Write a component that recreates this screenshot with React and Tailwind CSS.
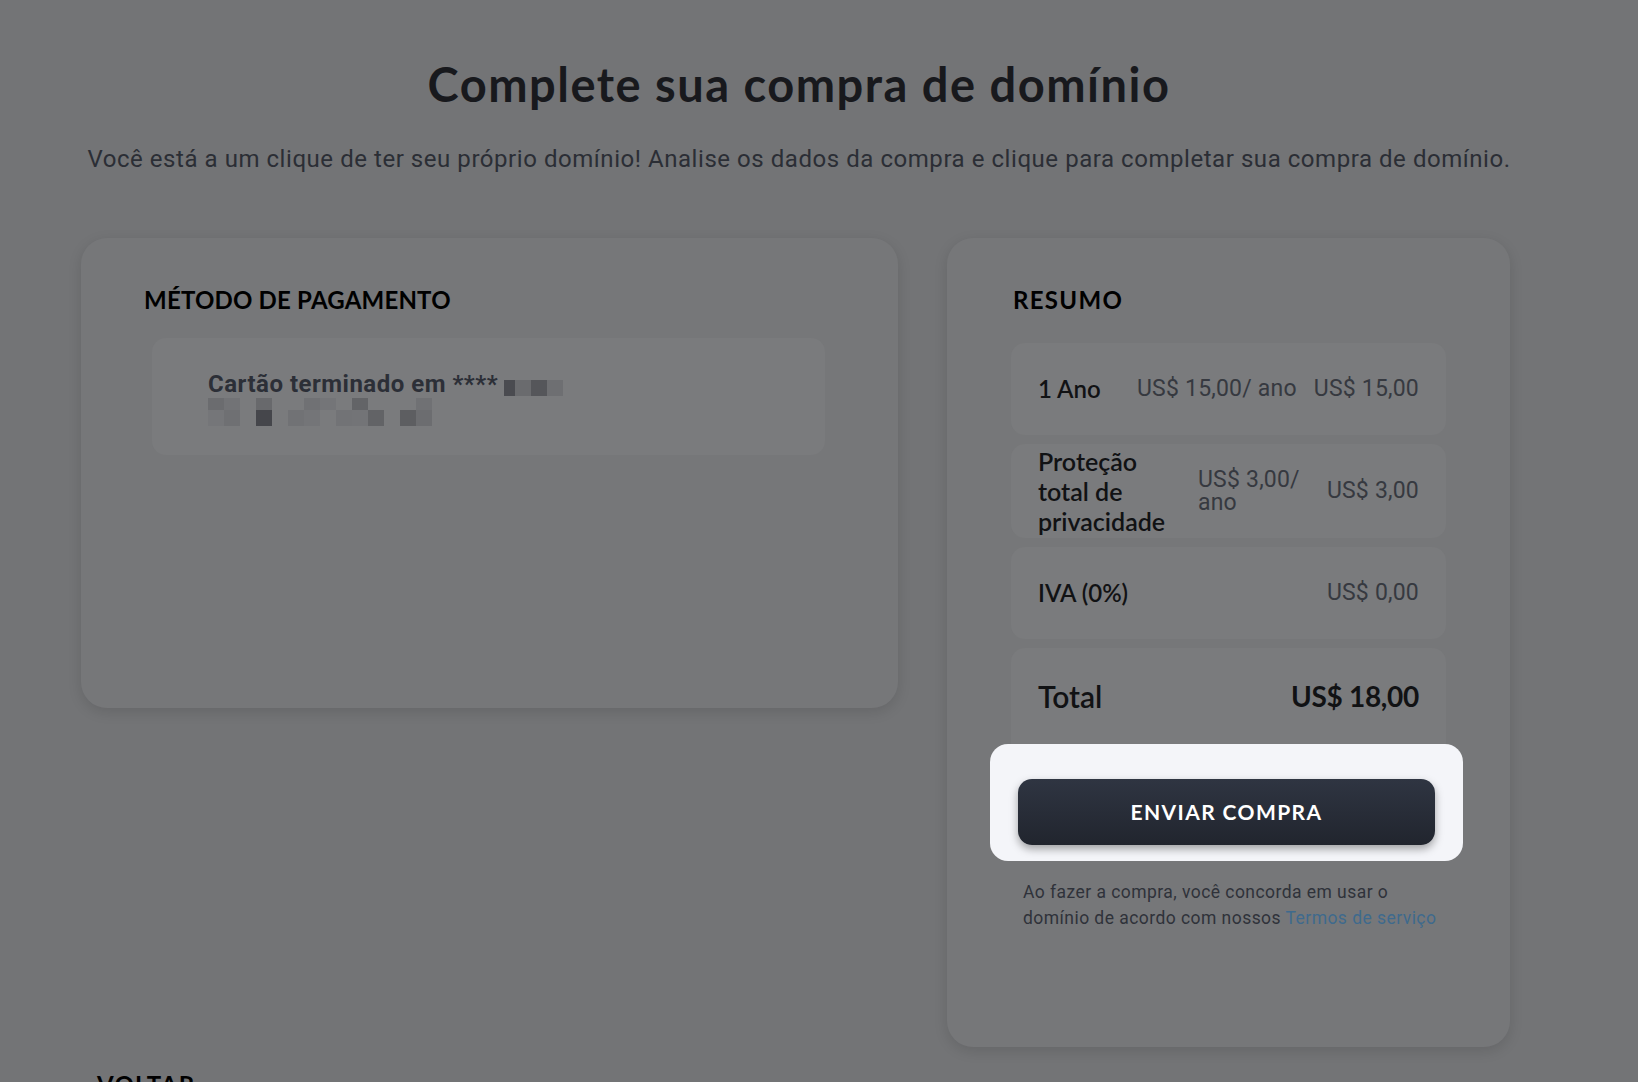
import React from "react";

const heading = { fontFamily: "Lato, 'Noto Sans', sans-serif" };

function Pixels() {
  const rowA = ["#6b6c6f", "#727376", null, "#68696c", null, null, "#707174", "#747578", null, "#636467", null, null, null, "#707174"];
  const rowB = ["#757679", "#6f7073", null, "#45464b", null, "#717275", "#747578", null, "#727376", "#737477", "#626366", null, "#5d5e61", "#6c6d70"];
  return (
    <div className="flex flex-col pl-[8px]">
      <div className="flex">
        {rowA.map((c, i) => (
          <span key={i} className="block w-[16px] h-[12px]" style={{ background: c || "transparent" }} />
        ))}
      </div>
      <div className="flex">
        {rowB.map((c, i) => (
          <span key={i} className="block w-[16px] h-[16px]" style={{ background: c || "transparent" }} />
        ))}
      </div>
    </div>
  );
}

function Row({ children, className = "" }) {
  return (
    <div className={"flex items-center rounded-[14px] bg-[#7a7b7d] px-[27px] " + className}>
      {children}
    </div>
  );
}

export default function App() {
  return (
    <div className="h-[1082px] overflow-hidden bg-[#737476]" style={{ fontFamily: "Roboto, sans-serif" }}>
      <div className="w-[1598px] pt-[54px]">
        <h1 className="text-center text-[47px] leading-[60px] font-bold text-[#18191d] tracking-[1.5px]" style={heading}>
          Complete sua compra de domínio
        </h1>
        <p className="mt-[29px] text-center text-[24px] leading-[32px] text-[#2b2e35] tracking-[0.55px]">
          Você está a um clique de ter seu próprio domínio! Analise os dados da compra e clique para completar sua compra de domínio.
        </p>

        <div className="mt-[63px] flex items-start gap-[49px] pl-[81px]">
          {/* Left card */}
          <div className="w-[817px] h-[470px] rounded-[26px] bg-[#767779] shadow-[0_4px_14px_rgba(0,0,0,0.12)] pl-[63px] pr-[73px] pt-[46px]">
            <h2 className="text-[24px] leading-[32px] font-bold text-black tracking-[0.2px]" style={heading}>
              MÉTODO DE PAGAMENTO
            </h2>
            <div className="mt-[22px] ml-[8px] h-[117px] rounded-[14px] bg-[#7a7b7d] pl-[56px] pt-[32px]">
              <div className="flex items-end">
                <span className="text-[24px] leading-[28px] font-bold text-[#2c2f37] tracking-[0.5px]">
                  Cartão terminado em ****
                </span>
                <span className="ml-[6px] mb-[2px] flex">
                  <span className="block w-[11px] h-[16px] bg-[#4a4b50]" />
                  <span className="block w-[16px] h-[16px] bg-[#6a6b6e]" />
                  <span className="block w-[16px] h-[16px] bg-[#55565a]" />
                  <span className="block w-[16px] h-[16px] bg-[#6e6f72]" />
                </span>
              </div>
              <div className="-ml-[8px]">
                <Pixels />
              </div>
            </div>
          </div>

          {/* Right card */}
          <div className="w-[563px] h-[809px] rounded-[26px] bg-[#767779] shadow-[0_4px_14px_rgba(0,0,0,0.12)] px-[64px] pt-[46px]">
            <h2 className="pl-[2px] text-[24px] leading-[32px] font-bold text-black tracking-[1.3px]" style={heading}>
              RESUMO
            </h2>
            <div className="mt-[27px] flex flex-col gap-[9px]">
              <Row className="h-[92px]">
                <span className="flex-1 text-[24px] font-semibold text-[#111214]" style={heading}>1 Ano</span>
                <span className="text-[23px] text-[#363940] tracking-[0.2px]">US$ 15,00/ ano</span>
                <span className="ml-[17px] text-[23px] text-[#363940] tracking-[0.2px]">US$ 15,00</span>
              </Row>
              <Row className="h-[94px]">
                <span className="w-[140px] text-[25px] leading-[30px] font-semibold text-[#111214]" style={heading}>
                  Proteção total de privacidade
                </span>
                <span className="ml-[20px] w-[110px] text-[23px] leading-[23px] text-[#363940] tracking-[0.2px]">US$ 3,00/ ano</span>
                <span className="ml-auto text-[23px] text-[#363940] tracking-[0.2px]">US$ 3,00</span>
              </Row>
              <Row className="h-[92px]">
                <span className="flex-1 text-[24px] font-semibold text-[#111214]" style={heading}>IVA (0%)</span>
                <span className="text-[23px] text-[#363940] tracking-[0.2px]">US$ 0,00</span>
              </Row>
              <Row className="h-[96px] rounded-b-none">
                <span className="flex-1 text-[30px] font-semibold text-[#111214]" style={heading}>Total</span>
                <span className="text-[28px] font-bold text-[#111214] tracking-[-0.3px]" style={heading}>US$ 18,00</span>
              </Row>
            </div>
            <div className="ml-[-21px] mr-[-17px] rounded-[18px] bg-[#f4f5f9] px-[28px] pt-[35px] pb-[16px]">
              <button className="flex h-[66px] w-full items-center justify-center rounded-[14px] bg-gradient-to-b from-[#2f3542] to-[#21252e] shadow-[0_4px_8px_rgba(0,0,0,0.35)]">
                <span className="text-[21px] font-bold text-white tracking-[1.4px]" style={heading}>ENVIAR COMPRA</span>
              </button>
            </div>
            <p className="mt-[18px] pl-[12px] text-[17.5px] leading-[26px] text-[#2f323a] tracking-[0.45px]">
              Ao fazer a compra, você concorda em usar o
              <br />
              domínio de acordo com nossos <span className="text-[#3e6a8d]">Termos de serviço</span>
            </p>
          </div>
        </div>

        <div className="mt-[20px] pl-[97px] text-[24px] font-bold tracking-[1.3px] text-black" style={heading}>
          VOLTAR
        </div>
      </div>
    </div>
  );
}
